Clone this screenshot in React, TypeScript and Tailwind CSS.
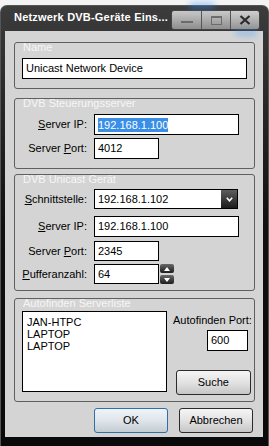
import type { ReactNode } from "react";

const Group = ({ title, className, children }: { title: string; className: string; children: ReactNode }) => (
  <div className={`ml-[9px] w-[241px] border border-[#5f5f5f] rounded-[3px] ${className}`}>
    <div className="h-[10px] pl-[8px] -mt-[1px] text-[11px] leading-[11px] text-[#f6f6f6] whitespace-nowrap">{title}</div>
    {children}
  </div>
);

const Field = ({ value, className, selected }: { value: string; className: string; selected?: boolean }) => (
  <div className={`border border-black bg-white flex items-center pl-[3px] text-[11px] text-black ${className}`}>
    {selected ? <span className="bg-[#3a8ee6] text-white leading-[14px]">{value}</span> : value}
  </div>
);

const Label = ({ first, rest }: { first: string; rest: ReactNode }) => (
  <div className="w-[72px] text-right text-[11px] text-black whitespace-nowrap">
    {first}
    {rest}
  </div>
);

const Btn = ({ text, ok }: { text: string; ok?: boolean }) => (
  <div
    className={`w-[74px] h-[25px] rounded-[3px] border flex items-center justify-center text-[11px] text-black ${
      ok
        ? "border-[#2f6fa3] bg-gradient-to-b from-[#eef4f8] via-[#dfe5ea] to-[#c4ccd3]"
        : "border-[#2b2b2b] bg-gradient-to-b from-[#f5f5f5] via-[#e2e2e2] to-[#c6c6c6]"
    }`}
  >
    {text}
  </div>
);

const Spin = ({ up }: { up?: boolean }) => (
  <div className="w-[14px] h-[9px] rounded-[2px] bg-gradient-to-b from-[#6a6a6a] to-[#1e1e1e] flex items-center justify-center">
    <svg width="6" height="4" viewBox="0 0 6 4">
      <path d={up ? "M0 4 L3 0 L6 4 Z" : "M0 0 L3 4 L6 0 Z"} fill="#fff" />
    </svg>
  </div>
);

export default function App() {
  return (
    <div className="w-[269px] h-[446px] bg-[#f3f3f3] flex flex-col overflow-hidden font-['Liberation_Sans',Arial,sans-serif]">
      <div className="h-[5px] shrink-0" />
      <div className="relative flex-1 flex flex-col rounded-t-[7px] bg-gradient-to-b from-[#3c3c3c] via-[#111] to-[#0a0a0a] border border-[#555] border-b-0">
        {/* title bar */}
        <div className="h-[25px] flex items-center pl-[13px] shrink-0">
          <div className="text-white font-bold text-[11px] tracking-[0.2px] whitespace-nowrap mt-[-2px]">Netzwerk DVB-Geräte Eins...</div>
          <div className="ml-auto mr-[8px] mt-[3px] h-[20px] flex rounded-[3px] border border-[#444] overflow-hidden">
            <div className="w-[30px] border-r border-[#555] bg-gradient-to-b from-[#c9c9c9] to-[#8e8e8e] flex items-center justify-center">
              <div className="w-[12px] h-[2px] bg-[#6c6c6c] mt-[3px]" />
            </div>
            <div className="w-[29px] border-r border-[#555] bg-gradient-to-b from-[#c9c9c9] to-[#8e8e8e] flex items-center justify-center">
              <div className="w-[11px] h-[9px] border border-[#6c6c6c] border-t-2" />
            </div>
            <div className="w-[28px] bg-gradient-to-b from-[#cfcfcf] to-[#959595] flex items-center justify-center">
              <svg width="12" height="10" viewBox="0 0 12 10">
                <path d="M1.5 1 L10.5 9 M10.5 1 L1.5 9" stroke="#2a2a2a" strokeWidth="2.2" />
              </svg>
            </div>
          </div>
          <div className="absolute left-[188px] top-[-3px] w-[26px] h-[5px] rounded-full bg-[#2f8fff] blur-[3px] opacity-50" />
          <div className="absolute left-[234px] top-[25px] w-[22px] h-[4px] rounded-full bg-[#2f8fff] blur-[3px] opacity-50" />
        </div>

        {/* client area */}
        <div className="ml-[4px] mr-[5px] mb-[9px] flex-1 bg-[#d4d4d4] flex flex-col">
          <Group title="Name" className="mt-[11px] h-[47px]">
            <Field value="Unicast Network Device" className="mt-[6px] ml-[7px] w-[225px] h-[21px]" />
          </Group>

          <Group title="DVB Steuerungsserver" className="mt-[9px] h-[71px]">
            <div className="flex items-center mt-[6px]">
              <Label first="" rest={<><span className="underline">S</span>erver IP:</>} />
              <Field value="192.168.1.100" selected className="ml-[7px] w-[145px] h-[21px]" />
            </div>
            <div className="flex items-center mt-[3px]">
              <Label first="Server " rest={<><span className="underline">P</span>ort:</>} />
              <Field value="4012" className="ml-[7px] w-[65px] h-[21px]" />
            </div>
          </Group>

          <Group title="DVB Unicast Gerät" className="mt-[5px] h-[117px]">
            <div className="flex items-center mt-[5px]">
              <Label first="" rest={<><span className="underline">S</span>chnittstelle:</>} />
              <div className="ml-[7px] w-[144px] h-[20px] border border-black bg-white flex text-[11px]">
                <div className="flex-1 flex items-center pl-[3px]">192.168.1.102</div>
                <div className="w-[16px] bg-gradient-to-b from-[#5e5e5e] to-[#1c1c1c] flex items-center justify-center">
                  <svg width="7" height="5" viewBox="0 0 7 5">
                    <path d="M0.8 0.8 L3.5 3.8 L6.2 0.8" stroke="#fff" strokeWidth="1.6" fill="none" />
                  </svg>
                </div>
              </div>
            </div>
            <div className="flex items-center mt-[7px]">
              <Label first="" rest={<><span className="underline">S</span>erver IP:</>} />
              <Field value="192.168.1.100" className="ml-[7px] w-[145px] h-[21px]" />
            </div>
            <div className="flex items-center mt-[4px]">
              <Label first="Server " rest={<><span className="underline">P</span>ort:</>} />
              <Field value="2345" className="ml-[7px] w-[65px] h-[20px]" />
            </div>
            <div className="flex items-center mt-[3px]">
              <Label first="" rest={<><span className="underline">P</span>ufferanzahl:</>} />
              <Field value="64" className="ml-[7px] w-[65px] h-[20px]" />
              <div className="ml-[1px] flex flex-col gap-[2px]">
                <Spin up />
                <Spin />
              </div>
            </div>
          </Group>

          <Group title="Autofinden Serverliste" className="mt-[7px] h-[104px]">
            <div className="flex mt-[3px]">
              <div className="ml-[7px] w-[145px] h-[81px] border border-black bg-white pl-[4px] pt-[4px] text-[11px] leading-[12px] text-black">
                <div>JAN-HTPC</div>
                <div>LAPTOP</div>
                <div>LAPTOP</div>
              </div>
              <div className="ml-[6px] flex flex-col items-end">
                <div className="text-[11px] text-black mt-[3px] whitespace-nowrap leading-[13px]">Autofinden Port:</div>
                <Field value="600" className="mt-[3px] mr-[4px] w-[41px] h-[21px]" />
                <div className="mt-[19px] mr-[1px]">
                  <div className="w-[75px] h-[25px] rounded-[3px] border border-[#2b2b2b] bg-gradient-to-b from-[#f5f5f5] via-[#e2e2e2] to-[#c6c6c6] flex items-center justify-center text-[11px]">
                    Suche
                  </div>
                </div>
              </div>
            </div>
          </Group>

          <div className="flex mt-[6px] ml-[89px] gap-[11px]">
            <Btn text="OK" ok />
            <Btn text="Abbrechen" />
          </div>
        </div>
      </div>
    </div>
  );
}
